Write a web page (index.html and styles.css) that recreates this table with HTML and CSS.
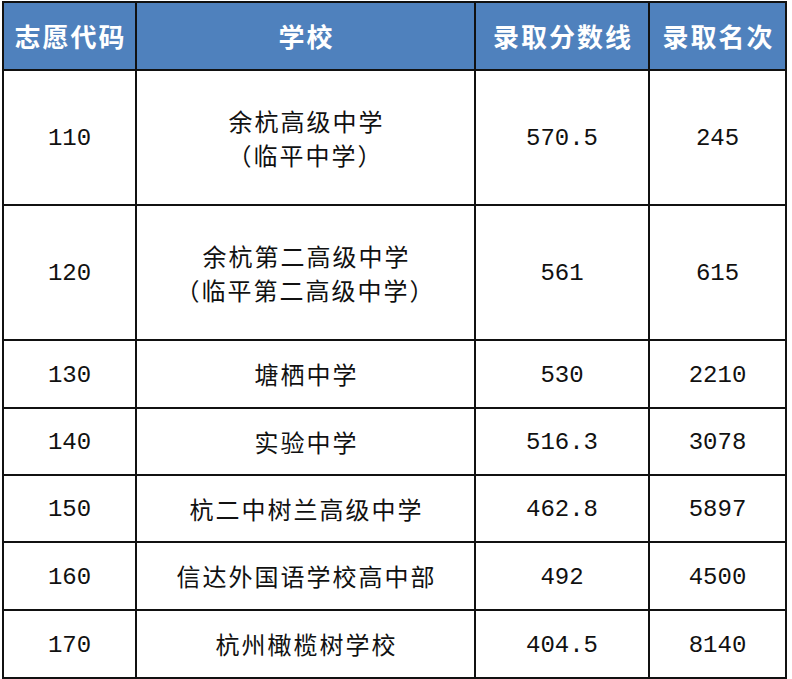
FILE: index.html
```html
<!DOCTYPE html>
<html lang="zh-CN">
<head>
<meta charset="utf-8">
<title>录取分数线</title>
<link rel="stylesheet" href="styles.css">
</head>
<body>
<table class="score-table">
  <thead>
    <tr class="row-head">
      <th class="c-code">志愿代码</th>
      <th class="c-school">学校</th>
      <th class="c-score">录取分数线</th>
      <th class="c-rank">录取名次</th>
    </tr>
  </thead>
  <tbody>
    <tr class="row-tall">
      <td class="num">110</td>
      <td class="school">余杭高级中学<br>（临平中学）</td>
      <td class="num">570.5</td>
      <td class="num">245</td>
    </tr>
    <tr class="row-tall">
      <td class="num">120</td>
      <td class="school">余杭第二高级中学<br>（临平第二高级中学）</td>
      <td class="num">561</td>
      <td class="num">615</td>
    </tr>
    <tr class="row-68">
      <td class="num">130</td>
      <td class="school">塘栖中学</td>
      <td class="num">530</td>
      <td class="num">2210</td>
    </tr>
    <tr class="row-67">
      <td class="num">140</td>
      <td class="school">实验中学</td>
      <td class="num">516.3</td>
      <td class="num">3078</td>
    </tr>
    <tr class="row-67">
      <td class="num">150</td>
      <td class="school">杭二中树兰高级中学</td>
      <td class="num">462.8</td>
      <td class="num">5897</td>
    </tr>
    <tr class="row-68">
      <td class="num">160</td>
      <td class="school">信达外国语学校高中部</td>
      <td class="num">492</td>
      <td class="num">4500</td>
    </tr>
    <tr class="row-68">
      <td class="num">170</td>
      <td class="school">杭州橄榄树学校</td>
      <td class="num">404.5</td>
      <td class="num">8140</td>
    </tr>
  </tbody>
</table>
</body>
</html>
```
FILE: styles.css
```css
html, body {
  margin: 0;
  padding: 0;
  background: #ffffff;
}

.score-table {
  margin: 1px 0 0 2px;
  border-collapse: separate;
  border-spacing: 0;
  table-layout: fixed;
  width: 785px;
  border-left: 2px solid #111;
  border-top: 2px solid #111;
}

.score-table th,
.score-table td {
  box-sizing: border-box;
  border-right: 2px solid #111;
  border-bottom: 2px solid #111;
  padding: 0;
  text-align: center;
  vertical-align: middle;
  color: #111;
}

.c-code { width: 133px; }
.c-school { width: 339px; }
.c-score { width: 174px; }
.c-rank { width: 137px; }

.row-head { height: 68px; }
.row-tall { height: 135px; }
.row-68 { height: 68px; }
.row-67 { height: 67px; }

.score-table th {
  background: #4f81bd;
  color: #ffffff;
  font-family: "Noto Sans CJK SC", "Noto Sans", sans-serif;
  font-weight: 700;
  font-size: 26px;
  letter-spacing: 2px;
  text-indent: 2px;
  line-height: 30px;
}

.school {
  font-family: "Noto Sans CJK SC", "Noto Sans", sans-serif;
  font-size: 24px;
  letter-spacing: 2px;
  text-indent: 2px;
  line-height: 34px;
  padding-top: 2px;
}

.score-table .num {
  font-family: "Liberation Mono", "DejaVu Sans Mono", monospace;
  font-size: 24px;
  line-height: 30px;
  padding-top: 3px;
}
```
